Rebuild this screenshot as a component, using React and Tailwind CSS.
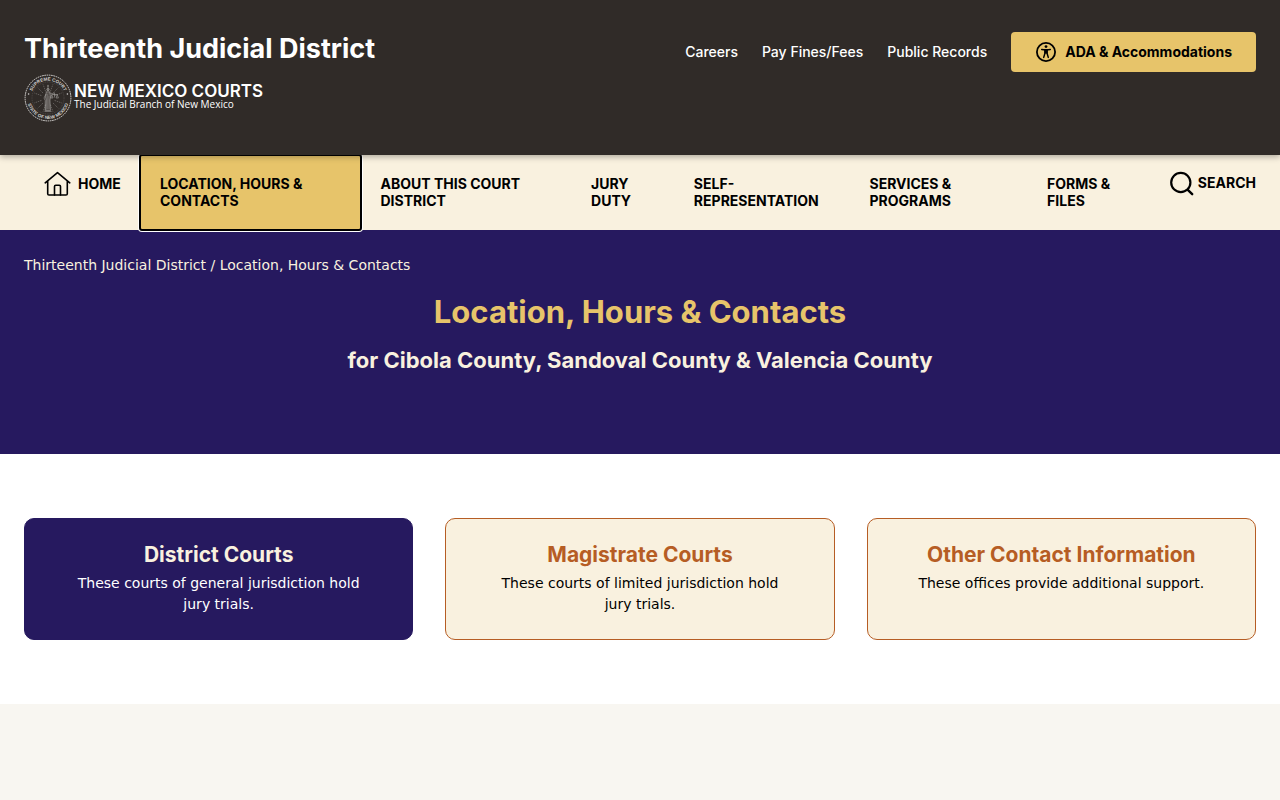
import clsx from "clsx";

const topLinks = ["Careers", "Pay Fines/Fees", "Public Records"];

const navItems = [
  { label: "Location, Hours & Contacts", size: "grow-[181]", active: true },
  { label: "About This Court District", size: "grow-[171]" },
  { label: "Jury Duty", size: "grow-[63]" },
  { label: "Self-Representation", size: "grow-[136]" },
  { label: "Services & Programs", size: "grow-[138]" },
  { label: "Forms & Files", size: "grow-[82]" },
];

const cards = [
  { title: "District Courts", text: "These courts of general jurisdiction hold jury trials.", active: true },
  { title: "Magistrate Courts", text: "These courts of limited jurisdiction hold jury trials." },
  { title: "Other Contact Information", text: "These offices provide additional support." },
];

const rays = [20, 45, 70, 110, 135, 160, 200, 225, 250, 290, 315, 340];

function Seal() {
  return (
    <svg viewBox="0 0 48 48" className="size-12 shrink-0" fill="none" stroke="#d6d4d2" aria-hidden="true">
      <defs>
        <path id="seal-top" d="M6.6 24a17.4 17.4 0 0 1 34.8 0" />
        <path id="seal-bottom" d="M3 24a21 21 0 0 0 42 0" />
      </defs>
      <circle cx="24" cy="24" r="22.9" strokeWidth="1" strokeDasharray="1.6 0.7" />
      <circle cx="24" cy="24" r="16" strokeWidth="0.4" strokeDasharray="1 0.8" opacity="0.4" />
      <g fill="#d6d4d2" stroke="none" fontSize="4.6" fontWeight="700" fontFamily="Liberation Sans, sans-serif" textAnchor="middle">
        <text><textPath href="#seal-top" startOffset="50%">SUPREME COURT</textPath></text>
        <text><textPath href="#seal-bottom" startOffset="50%">STATE OF NEW MEXICO</textPath></text>
        <circle cx="4.6" cy="20" r="0.8" />
        <circle cx="43.4" cy="20" r="0.8" />
      </g>
      <g strokeWidth="0.5" strokeDasharray="1.5 0.8" opacity="0.55">
        {rays.map((a) => (
          <path key={a} d="M24 17V9.5" transform={`rotate(${a} 24 24)`} />
        ))}
      </g>
      <g strokeWidth="0.5" opacity="0.8">
        <path d="M24 14v-3.2M23 12h2" />
        <circle cx="24" cy="15.5" r="1.2" fill="#85817e" />
        <path d="M22.3 17.8h3.4l1 5.2-.7 3 .5 10.5h-4.8l.5-10.5-.8-3.5z" fill="#5d5855" />
        <path d="M23.2 20v15M25 22v13" stroke="#a9a6a3" />
        <path d="M25.8 19l4.5 1M22 20l-2 4 1.2 2.5V37M30.5 18.5v5M27.8 20.5h5.4M27.8 20.5l-1 3.5h2.2zM33.2 20.5l-1.2 3.5h2.4z" />
        <path d="M20.5 37.5h7" />
      </g>
    </svg>
  );
}

function HomeIcon() {
  return (
    <svg viewBox="0 0 28 26" className="h-[26px] w-7 shrink-0" fill="none" stroke="currentColor" strokeWidth="1.6" strokeLinecap="round" strokeLinejoin="round" aria-hidden="true">
      <path d="M1.2 11.8 13.5 1.7l12.3 10.1M3.7 10v12.7c0 .9.4 1.3 1.3 1.3h17c.9 0 1.3-.4 1.3-1.3V10" />
      <path d="M10.5 24v-8.5c0-.8.4-1.2 1.2-1.2h3.6c.8 0 1.2.4 1.2 1.2V24" />
    </svg>
  );
}

function AdaIcon() {
  return (
    <svg viewBox="0 0 22 22" className="size-[22px] shrink-0" fill="none" stroke="currentColor" strokeLinecap="round" aria-hidden="true">
      <circle cx="11" cy="11" r="9.1" strokeWidth="1.8" />
      <circle cx="11" cy="5.6" r="1.4" fill="currentColor" stroke="none" />
      <path d="M6.7 8.5c2.9.5 5.7.5 8.6 0" strokeWidth="1.5" />
      <path d="M9.9 9v3.4l-1.2 4M12.1 9v3.4l1.2 4" strokeWidth="1.5" />
      <path d="M9.5 9h3v3.6h-3z" fill="currentColor" stroke="none" />
    </svg>
  );
}

function Header() {
  return (
    <header className="relative z-10 flex items-start justify-between bg-[#302b28] px-6 pt-8 pb-8 text-white shadow-[0_2px_6px_rgba(0,0,0,0.3)]">
      <div>
        <a href="#" className="block text-[27px] leading-[34px] font-bold">Thirteenth Judicial District</a>
        <a href="#" className="mt-2 mb-px flex h-12 items-center gap-0.5">
          <Seal />
          <span className="flex flex-col pb-1">
            <span className="text-[17px] leading-4 font-semibold">NEW MEXICO COURTS</span>
            <span className="font-['Open_Sans',sans-serif] text-[10px] leading-[10px] font-medium">The Judicial Branch of New Mexico</span>
          </span>
        </a>
      </div>
      <div className="flex items-center gap-6">
        {topLinks.map((label) => (
          <a key={label} href="#" className="text-sm font-medium">{label}</a>
        ))}
        <a href="#" className="flex h-10 items-center gap-2 rounded bg-[#e7c46a] px-6 text-sm font-bold text-black">
          <AdaIcon />
          ADA &amp; Accommodations
        </a>
      </div>
    </header>
  );
}

function Nav() {
  return (
    <nav className="flex min-h-[75px] items-stretch bg-[#f9f1df] px-6 text-sm leading-[17px] font-bold text-black uppercase">
      <a href="#" className="flex shrink-0 grow-0 basis-[116px] items-start gap-1.5 pt-4 pl-5">
        <HomeIcon />
        <span className="pt-1">Home</span>
      </a>
      {navItems.map(({ label, size, active }) => (
        <a
          key={label}
          href="#"
          className={clsx(
            "basis-0 px-5 pt-5",
            size,
            active && "relative rounded-xs bg-[#e7c46a] ring-2 ring-white outline-2 -outline-offset-1 outline-black"
          )}
        >
          {label}
        </a>
      ))}
      <button type="button" className="ml-5 flex items-start gap-1 pt-4 font-bold uppercase">
        <svg viewBox="0 0 25 26" className="h-[26px] w-[25px]" fill="none" stroke="currentColor" strokeWidth="2.2" strokeLinecap="round" aria-hidden="true">
          <circle cx="11.8" cy="11.5" r="9.6" />
          <path d="m18.8 18.8 4.4 4.4" strokeWidth="2.4" />
        </svg>
        <span className="pt-[3px]">Search</span>
      </button>
    </nav>
  );
}

function Card({ title, text, active }) {
  return (
    <a
      href="#"
      className={clsx(
        "rounded-[10px] border px-12 pt-6 pb-6 text-center",
        active ? "border-[#26195f] bg-[#26195f] text-white" : "border-[#b65d24] bg-[#f9f1df] text-black"
      )}
    >
      <h3 className={clsx("text-[21px] leading-6 font-bold", active ? "text-[#f9f1df]" : "text-[#b65d24]")}>{title}</h3>
      <p className="mt-1.5 font-['DejaVu_Sans',sans-serif] text-sm leading-[21px]">{text}</p>
    </a>
  );
}

export default function App() {
  return (
    <div className="min-h-screen bg-[#f8f6f1] font-['Inter',sans-serif]">
      <Header />
      <Nav />
      <section className="bg-[#26195f] px-6 pt-[25px] pb-20 text-center text-[#f9f1df]">
        <p className="text-left font-['DejaVu_Sans',sans-serif] text-sm leading-[21px]">
          <a href="#">Thirteenth Judicial District</a> / Location, Hours &amp; Contacts
        </p>
        <h1 className="mt-[18px] text-[31px] leading-9 font-bold text-[#e7c46a]">Location, Hours &amp; Contacts</h1>
        <h2 className="mt-4 text-[22px] leading-7 font-bold">for Cibola County, Sandoval County &amp; Valencia County</h2>
      </section>
      <main className="grid grid-cols-3 gap-8 bg-white px-6 py-16">
        {cards.map((card) => (
          <Card key={card.title} {...card} />
        ))}
      </main>
    </div>
  );
}
